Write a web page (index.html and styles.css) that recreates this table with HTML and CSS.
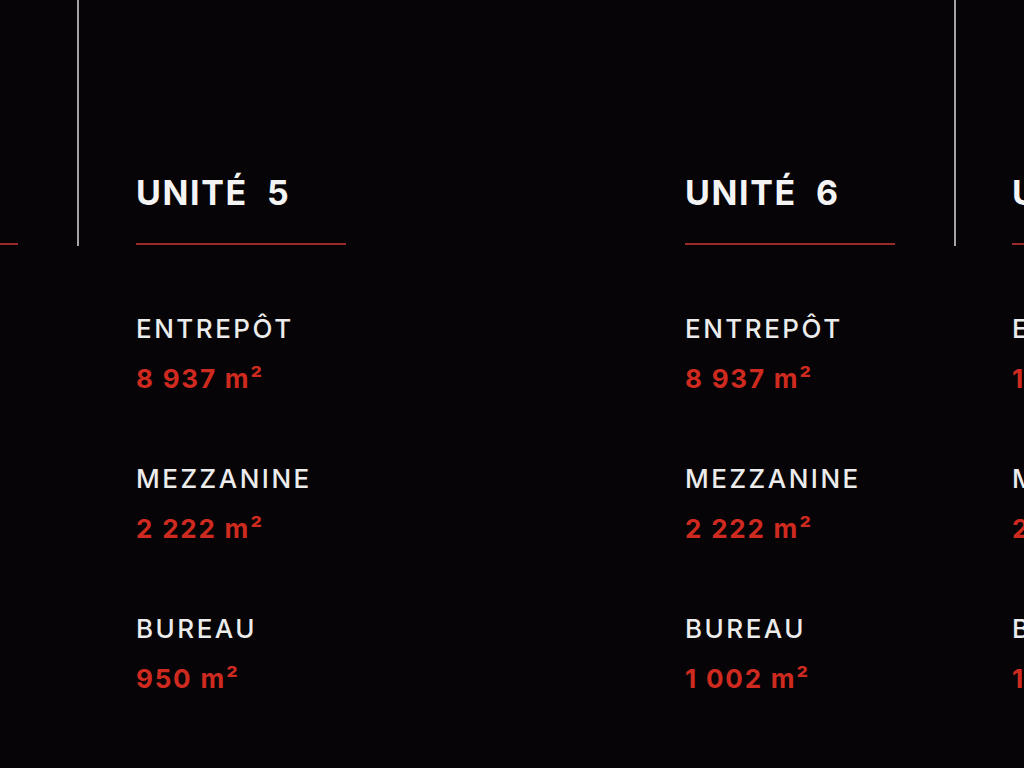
FILE: index.html
```html
<!DOCTYPE html>
<html lang="fr">
<head>
<meta charset="utf-8">
<title>Unités</title>
<link rel="stylesheet" href="styles.css">
</head>
<body>
<div class="strip">
  <section class="group group-first">
    <div class="unit">
      <div class="rule"></div>
    </div>
  </section>
  <div class="divider"></div>
  <section class="group group-mid">
    <div class="unit">
      <h2 class="title">UNITÉ&nbsp; 5</h2>
      <dl class="specs">
        <dt>ENTREPÔT</dt><dd>8 937 m²</dd>
        <dt>MEZZANINE</dt><dd>2 222 m²</dd>
        <dt>BUREAU</dt><dd>950 m²</dd>
      </dl>
    </div>
    <div class="unit">
      <h2 class="title">UNITÉ&nbsp; 6</h2>
      <dl class="specs">
        <dt>ENTREPÔT</dt><dd>8 937 m²</dd>
        <dt>MEZZANINE</dt><dd>2 222 m²</dd>
        <dt>BUREAU</dt><dd>1 002 m²</dd>
      </dl>
    </div>
  </section>
  <div class="divider"></div>
  <section class="group group-last">
    <div class="unit">
      <h2 class="title">UNITÉ&nbsp; 7</h2>
      <dl class="specs">
        <dt>ENTREPÔT</dt><dd>1 0 m²</dd>
        <dt>MEZZANINE</dt><dd>2 222 m²</dd>
        <dt>BUREAU</dt><dd>1 002 m²</dd>
      </dl>
    </div>
  </section>
</div>
</body>
</html>
```

FILE: styles.css
```css
html, body {
  margin: 0;
  padding: 0;
  background: #060407;
  overflow: hidden;
}

body {
  width: 1024px;
  height: 768px;
  font-family: Inter, "Liberation Sans", sans-serif;
  color: #ececec;
}

.strip {
  display: flex;
  align-items: flex-start;
  margin-left: -192px;
  width: max-content;
}

.group {
  display: flex;
  align-items: flex-start;
}

.group-first {
  padding-right: 59px;
}

.group-mid {
  padding: 0 59px 0 57px;
  gap: 339px;
}

.group-last {
  padding-left: 56px;
}

.divider {
  width: 2px;
  height: 246px;
  background: #a4a4a4;
  flex: none;
}

.unit {
  width: 210px;
  flex: none;
}

.rule {
  margin-top: 243px;
  height: 2px;
  background: #9a2a2a;
}

.title {
  margin: 173px 0 0;
  padding-bottom: 30px;
  border-bottom: 2px solid #9a2a2a;
  font-size: 34px;
  line-height: 40px;
  font-weight: 700;
  color: #f4f4f4;
  white-space: nowrap;
  letter-spacing: 1.6px;
}

.specs {
  margin: 69px 0 0;
}

.specs dt {
  font-size: 26px;
  line-height: 30px;
  font-weight: 500;
  color: #ececec;
  white-space: nowrap;
  letter-spacing: 2.5px;
}

.specs dd {
  margin: 20px 0 70px;
  font-size: 26px;
  line-height: 30px;
  font-weight: 700;
  color: #cf2a1f;
  white-space: nowrap;
  letter-spacing: 1.8px;
}
```
